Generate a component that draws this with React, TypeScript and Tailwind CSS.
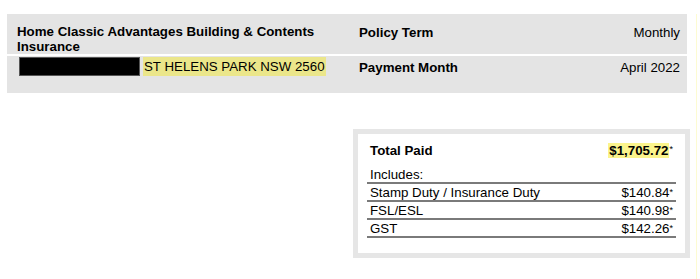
export default function App() {
  const duties = [
    { label: 'Stamp Duty / Insurance Duty', amount: '$140.84' },
    { label: 'FSL/ESL', amount: '$140.98' },
    { label: 'GST', amount: '$142.26' },
  ]

  return (
    <div
      className="h-[279px] w-[700px] overflow-hidden bg-white text-[13.3px] leading-[15px] text-black"
      style={{ fontFamily: '"Liberation Sans", Arial, sans-serif' }}
    >
      <div className="h-[271px] w-[697px] border-b border-r border-[#fdfbd2]">
        {/* Policy details */}
        <div className="ml-[7px] mt-[14px] w-[680px] bg-[#e4e4e4]">
          <div className="flex h-[40px] pt-[10px]">
            <div className="w-[352px] pl-[10px] font-bold">Home Classic Advantages Building &amp; Contents Insurance</div>
            <div className="flex flex-1 justify-between pr-[7px] pt-[1px]">
              <span className="font-bold">Policy Term</span>
              <span>Monthly</span>
            </div>
          </div>
          <div className="h-[2px] bg-white" />
          <div className="flex h-[37px] pt-[1px]">
            <div className="flex w-[352px] items-start gap-[3px] pl-[12px]">
              <div className="h-[19px] w-[121px] border border-[#555] bg-black" />
              <span className="bg-[#ebe68a] px-[1px] leading-[19px]">ST HELENS PARK NSW 2560</span>
            </div>
            <div className="flex flex-1 justify-between pr-[7px] pt-[3px]">
              <span className="font-bold">Payment Month</span>
              <span>April 2022</span>
            </div>
          </div>
        </div>

        {/* Totals */}
        <div className="ml-[353px] mt-[36px] h-[129px] w-[337px] border-[5px] border-[#e6e6e6] bg-white px-[9px] pt-[8px]">
          <div className="flex items-center justify-between pl-[3px] pr-[3px]">
            <span className="font-bold">Total Paid</span>
            <span>
              <span className="bg-[#fbf48c] px-[1px] font-bold leading-[17px]">$1,705.72</span>
              <span className="align-top text-[9px]">*</span>
            </span>
          </div>
          <div className="mt-[7px] h-[18px] border-b-2 border-[#7a7a7a] pl-[3px] leading-[17px]">Includes:</div>
          {duties.map((d) => (
            <div
              key={d.label}
              className="flex h-[18px] items-center justify-between border-b-2 border-[#7a7a7a] pl-[3px] pr-[3px]"
            >
              <span>{d.label}</span>
              <span>
                {d.amount}
                <span className="align-top text-[9px]">*</span>
              </span>
            </div>
          ))}
        </div>
      </div>
    </div>
  )
}
